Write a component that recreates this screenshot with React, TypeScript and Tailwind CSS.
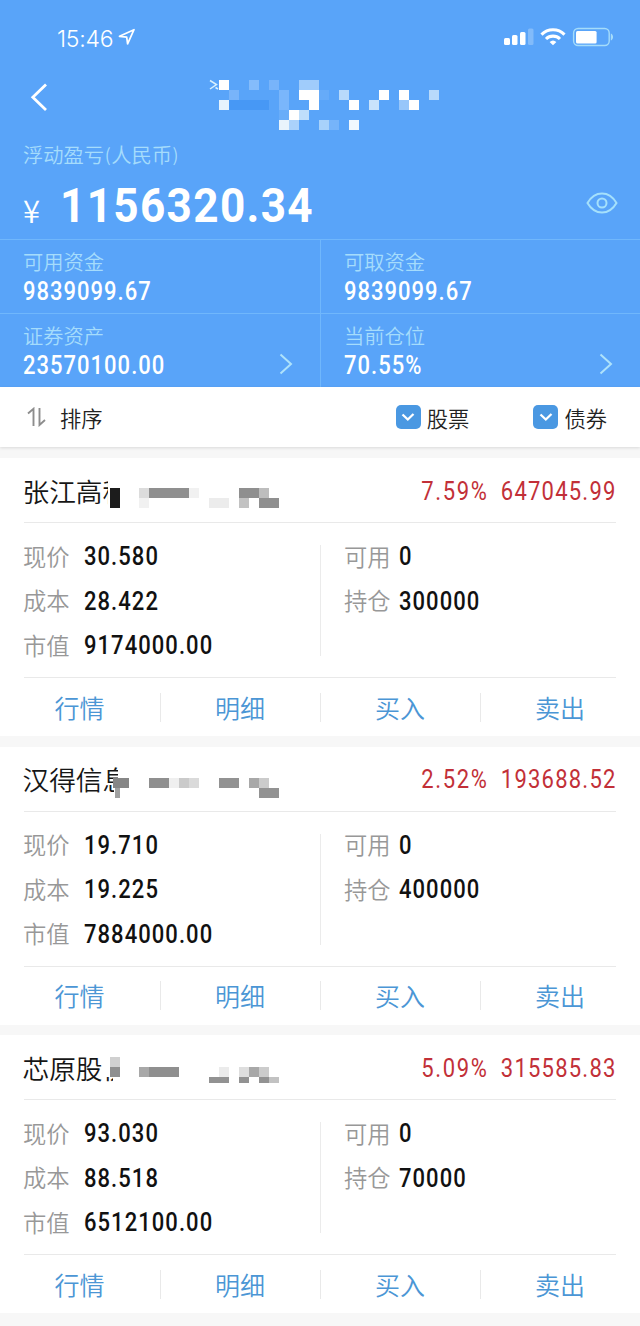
import { ReactNode } from "react";
import clsx from "clsx";

// [x, y, width, height, color]
type Block = [number, number, number, number, string];

interface Holding {
  name: string;
  percent: string;
  profit: string;
  price: string;
  cost: string;
  value: string;
  available: string;
  amount: string;
  mask: Block[];
}

const holdings: Holding[] = [
  {
    name: "张江高科",
    percent: "7.59%",
    profit: "647045.99",
    price: "30.580",
    cost: "28.422",
    value: "9174000.00",
    available: "0",
    amount: "300000",
    mask: [
      [108, 10, 30, 45, "#ffffff"],
      [110, 30, 10, 20, "#1c1c1c"],
      [139, 30, 10, 10, "#dcdcdc"],
      [139, 40, 10, 10, "#f1f1f1"],
      [149, 30, 40, 10, "#8f8f8f"],
      [189, 30, 10, 10, "#f1f1f1"],
      [209, 40, 20, 10, "#ececec"],
      [239, 30, 20, 10, "#8f8f8f"],
      [259, 30, 10, 10, "#bdbdbd"],
      [239, 40, 10, 10, "#c2c2c2"],
      [259, 40, 20, 10, "#8f8f8f"],
    ],
  },
  {
    name: "汉得信息",
    percent: "2.52%",
    profit: "193688.52",
    price: "19.710",
    cost: "19.225",
    value: "7884000.00",
    available: "0",
    amount: "400000",
    mask: [
      [118, 10, 20, 45, "#ffffff"],
      [114, 41, 10, 14, "#ffffff"],
      [113, 31, 16, 10, "#868686"],
      [115, 41, 5, 10, "#a0a0a0"],
      [149, 31, 20, 10, "#8f8f8f"],
      [169, 31, 10, 10, "#efefef"],
      [179, 31, 10, 10, "#cacaca"],
      [189, 31, 10, 10, "#dadada"],
      [219, 31, 20, 10, "#929292"],
      [249, 31, 10, 10, "#a8a8a8"],
      [259, 31, 10, 10, "#cbcbcb"],
      [259, 41, 20, 10, "#929292"],
    ],
  },
  {
    name: "芯原股份",
    percent: "5.09%",
    profit: "315585.83",
    price: "93.030",
    cost: "88.518",
    value: "6512100.00",
    available: "0",
    amount: "70000",
    mask: [
      [103, 10, 30, 32, "#ffffff"],
      [113, 40, 20, 14, "#ffffff"],
      [110, 22, 10, 10, "#d0d0d0"],
      [110, 32, 10, 10, "#8f8f8f"],
      [139, 32, 10, 10, "#a8a8a8"],
      [149, 32, 30, 10, "#8f8f8f"],
      [219, 32, 10, 10, "#ebebeb"],
      [209, 42, 20, 6, "#929292"],
      [239, 32, 10, 10, "#dedede"],
      [249, 32, 10, 10, "#a8a8a8"],
      [259, 32, 10, 10, "#cccccc"],
      [239, 42, 10, 6, "#929292"],
      [259, 42, 10, 6, "#929292"],
      [269, 42, 10, 6, "#c2c2c2"],
    ],
  },
];

const titleMask: Block[] = [
  [10, 0, 10, 10, "#ffffff"],
  [40, 0, 10, 10, "#84bcfb"],
  [60, 0, 10, 10, "#78b4fa"],
  [90, 0, 20, 10, "#a0ccfb"],
  [20, 10, 10, 10, "#78b4fa"],
  [70, 10, 10, 20, "#7ab6fb"],
  [90, 10, 20, 10, "#ffffff"],
  [110, 10, 10, 10, "#66abf9"],
  [130, 10, 10, 10, "#b8dafb"],
  [170, 10, 10, 10, "#ffffff"],
  [190, 10, 10, 10, "#ffffff"],
  [220, 10, 10, 10, "#b8dafb"],
  [10, 20, 10, 10, "#e6f3fd"],
  [20, 20, 40, 10, "#4798f5"],
  [100, 20, 10, 10, "#ffffff"],
  [140, 20, 10, 10, "#ffffff"],
  [160, 20, 10, 10, "#c9e3fc"],
  [190, 20, 10, 10, "#97c6fa"],
  [200, 20, 10, 10, "#ffffff"],
  [70, 30, 10, 10, "#69adf9"],
  [80, 30, 10, 10, "#ffffff"],
  [90, 30, 10, 10, "#bfdefb"],
  [70, 40, 10, 10, "#e9f4fc"],
  [80, 40, 10, 10, "#aad2fb"],
  [110, 40, 10, 10, "#a8d2fb"],
  [120, 40, 10, 10, "#76b4fa"],
  [140, 40, 10, 10, "#f0f8fe"],
];

const actions = ["行情", "明细", "买入", "卖出"];

function Blocks({ blocks }: { blocks: Block[] }) {
  return (
    <>
      {blocks.map(([x, y, w, h, fill], i) => (
        <rect key={i} x={x} y={y} width={w} height={h} fill={fill} shapeRendering="crispEdges" />
      ))}
    </>
  );
}

// Narrow numerals with open spacing
function Num({ children, className }: { children: ReactNode; className?: string }) {
  return (
    <span
      className={clsx(
        "inline-block whitespace-nowrap font-['Roboto',sans-serif] text-[25px] leading-[30px] scale-x-[0.88]",
        className
      )}
    >
      {children}
    </span>
  );
}

function StatusBar() {
  return (
    <div className="flex h-[74px] items-center justify-between pl-[57px] pr-[26px] pt-[1px]">
      <div className="flex items-center">
        <span className="mt-[3px] font-['Inter',sans-serif] text-[23px] leading-none tracking-[-0.25px]">15:46</span>
        <svg className="ml-[5px] -mt-[2px]" width="18" height="18" viewBox="0 0 18 18" fill="none">
          <path d="M1.5 8.3 16 1.7 9.6 15.8 8.7 9.1Z" stroke="white" strokeWidth="1.7" strokeLinejoin="round" />
        </svg>
      </div>
      <div className="flex items-center">
        <svg className="-mt-[1px]" width="30" height="20" viewBox="0 0 30 20" fill="white">
          <rect x="0" y="11" width="6" height="7" rx="1.5" />
          <rect x="8" y="8" width="5.5" height="10" rx="1.5" />
          <rect x="16" y="5" width="5.5" height="13" rx="1.5" />
          <rect x="24" y="1.5" width="5.5" height="16.5" rx="1.5" opacity="0.25" />
        </svg>
        <svg className="ml-[6px] -mt-[2px]" width="26" height="20" viewBox="0 0 26 20" fill="none" stroke="white" strokeWidth="3.1">
          <path d="M1.5 7.6a16.2 16.2 0 0 1 23 0" />
          <path d="M6 12a10 10 0 0 1 14 0" />
          <path d="M13 18.2 9.6 15.1a5 5 0 0 1 6.8 0Z" fill="white" stroke="none" />
        </svg>
        <svg className="ml-[6px] -mt-[2px]" width="42" height="20" viewBox="0 0 42 20">
          <rect x="1.6" y="1.5" width="35.6" height="17" rx="4.5" fill="none" stroke="#a5dcfa" strokeWidth="1.4" />
          <rect x="4" y="4" width="20.6" height="12.6" rx="1.5" fill="white" />
          <path d="M38.8 6.5c3 1.3 3 5.7 0 7Z" fill="#a5dcfa" />
        </svg>
      </div>
    </div>
  );
}

function NavBar() {
  return (
    <div className="flex h-[66px] items-start pl-[30px] pt-[5px]">
      <svg className="mt-[3px]" width="20" height="30" viewBox="0 0 20 30" fill="none">
        <path d="M16 2.5 2.8 15.3 16 28" stroke="white" strokeWidth="2.8" />
      </svg>
      <svg className="ml-[159px]" width="232" height="52" viewBox="0 -1 232 52">
        <path d="M1 .5 7.500 4.500 1 9M6.500 7.500 9 9" stroke="#d8f0fd" strokeWidth="1.5" fill="none" />
        <Blocks blocks={titleMask} />
      </svg>
    </div>
  );
}

function FundCell({ label, value, arrow }: { label: string; value: string; arrow?: boolean }) {
  return (
    <div className="flex h-[74px] items-end justify-between border-t border-[#70b7fc] pl-[23px] pr-[26px] pb-[6px]">
      <div>
        <div className="mb-[2px] text-[20.300px] leading-[27px] text-[#a5dcfc]">{label}</div>
        <Num className="block origin-left font-medium tracking-[1.150px]">{value}</Num>
      </div>
      {arrow && (
        <svg className="mb-[6px]" width="16" height="22" viewBox="0 0 16 22" fill="none">
          <path d="M2.500 1.500 13 11 2.500 20.500" stroke="#aee2fb" strokeWidth="2" />
        </svg>
      )}
    </div>
  );
}

function CheckItem({ label }: { label: string }) {
  return (
    <div className="flex items-center">
      <div className="flex h-6 w-[25px] items-center justify-center rounded-[5px] bg-[#4a98e2]">
        <svg width="14" height="10" viewBox="0 0 14 10" fill="none">
          <path d="m1.500 2.500 5.300 5 5.700-5.500" stroke="white" strokeWidth="2.300" />
        </svg>
      </div>
      <span className="ml-[6px] mt-px text-[21.300px] text-[#222]">{label}</span>
    </div>
  );
}

function Field({ label, value, wide }: { label: string; value: string; wide?: boolean }) {
  return (
    <div className="flex h-[44.5px] items-center">
      <span className={clsx("text-[23.300px] text-[#989898]", wide ? "w-[61px]" : "w-[55px]")}>{label}</span>
      <Num className="mt-[2px] origin-left font-medium tracking-[1.200px] text-[#111]">{value}</Num>
    </div>
  );
}

function HoldingCard({ item }: { item: Holding }) {
  return (
    <section className="h-[278px] bg-white">
      <div className="relative mx-6 flex h-[65px] items-center justify-between border-b border-[#e9e9e9] pt-[2px]">
        <span className="-ml-[1.500px] text-[26.700px] text-[#161616]">{item.name}</span>
        {/* account digits are masked out */}
        <svg className="absolute -left-6 top-0" width="300" height="60" viewBox="0 0 300 60">
          <Blocks blocks={item.mask} />
        </svg>
        <div className="flex pt-[1px] text-[#c23038]">
          <Num className="origin-right font-[450] tracking-[1.900px]">{item.percent}</Num>
          <Num className="-ml-[3px] -mr-[1px] origin-right font-[450] tracking-[1.400px]">{item.profit}</Num>
        </div>
      </div>
      <div className="flex h-[154px] pt-[11px]">
        <div className="w-[320px] pl-[23px]">
          <Field label="现价" value={item.price} wide />
          <Field label="成本" value={item.cost} wide />
          <Field label="市值" value={item.value} wide />
        </div>
        <div className="mt-[11px] h-[111px] w-px bg-[#ebebeb]" />
        <div className="pl-[23px]">
          <Field label="可用" value={item.available} />
          <Field label="持仓" value={item.amount} />
        </div>
      </div>
      <div className="mx-6 h-px bg-[#e9e9e9]" />
      <div className="grid h-[58px] grid-cols-4 items-center">
        {actions.map((action, i) => (
          <div
            key={action}
            className={clsx(
              "flex h-[29px] items-center justify-center pr-px text-[25px] text-[#4b96d5]",
              i > 0 && "border-l border-[#e9e9e9]"
            )}
          >
            {action}
          </div>
        ))}
      </div>
    </section>
  );
}

export default function App() {
  return (
    <div className="h-[1326px] w-[640px] overflow-hidden bg-[#f7f7f7] font-['Noto_Sans_CJK_SC',sans-serif] font-[350] leading-none">
      <header className="h-[387px] bg-[#59a4f9] text-white">
        <StatusBar />
        <NavBar />
        <div className="h-[99px] pl-[23px] pr-[22px] pt-[4px]">
          <div className="flex items-center text-[20.300px] leading-5 text-[#a5dcfc]">
            浮动盈亏
            <span className="w-[7px] text-center text-[18px]">(</span>
            人民币
            <span className="w-[7px] text-center text-[18px]">)</span>
          </div>
          <div className="mt-[9px] flex h-[64px] items-center">
            <span className="mt-[8px] w-[37px] text-[31px]">¥</span>
            <span className="origin-left scale-x-[0.9] font-['Roboto',sans-serif] text-[49px] font-bold tracking-[1.500px]">
              1156320.34
            </span>
            <svg className="-mt-[4px] ml-auto" width="32" height="22" viewBox="0 0 32 22" fill="none" stroke="#a5e0fb" strokeWidth="2">
              <path d="M1.500 11C5 5 10 1.500 16 1.500S27 5 30.500 11C27 17 22 20.500 16 20.500S5 17 1.500 11Z" />
              <circle cx="16" cy="11" r="4.500" />
            </svg>
          </div>
        </div>
        <div className="grid grid-cols-2">
          <FundCell label="可用资金" value="9839099.67" />
          <div className="border-l border-[#70b7fc]">
            <FundCell label="可取资金" value="9839099.67" />
          </div>
          <FundCell label="证券资产" value="23570100.00" arrow />
          <div className="border-l border-[#70b7fc]">
            <FundCell label="当前仓位" value="70.55%" arrow />
          </div>
        </div>
      </header>

      <div className="relative flex h-[60px] items-center bg-white pl-[27px] pr-[33px] shadow-[0_1px_3px_rgba(0,0,0,0.12)]">
        <svg width="20" height="20" viewBox="0 0 20 20" fill="none" stroke="#8d8d8d" strokeWidth="1.900">
          <path d="M1 6.500 6.500 1.800V19M12.500 1v17L18 13" />
        </svg>
        <span className="ml-[13px] mt-px text-[21.300px] text-[#222]">排序</span>
        <div className="ml-auto flex gap-[64px]">
          <CheckItem label="股票" />
          <CheckItem label="债券" />
        </div>
      </div>

      <main className="flex flex-col gap-[10.500px] pt-[11px]">
        {holdings.map((item) => (
          <HoldingCard key={item.name} item={item} />
        ))}
      </main>
    </div>
  );
}
